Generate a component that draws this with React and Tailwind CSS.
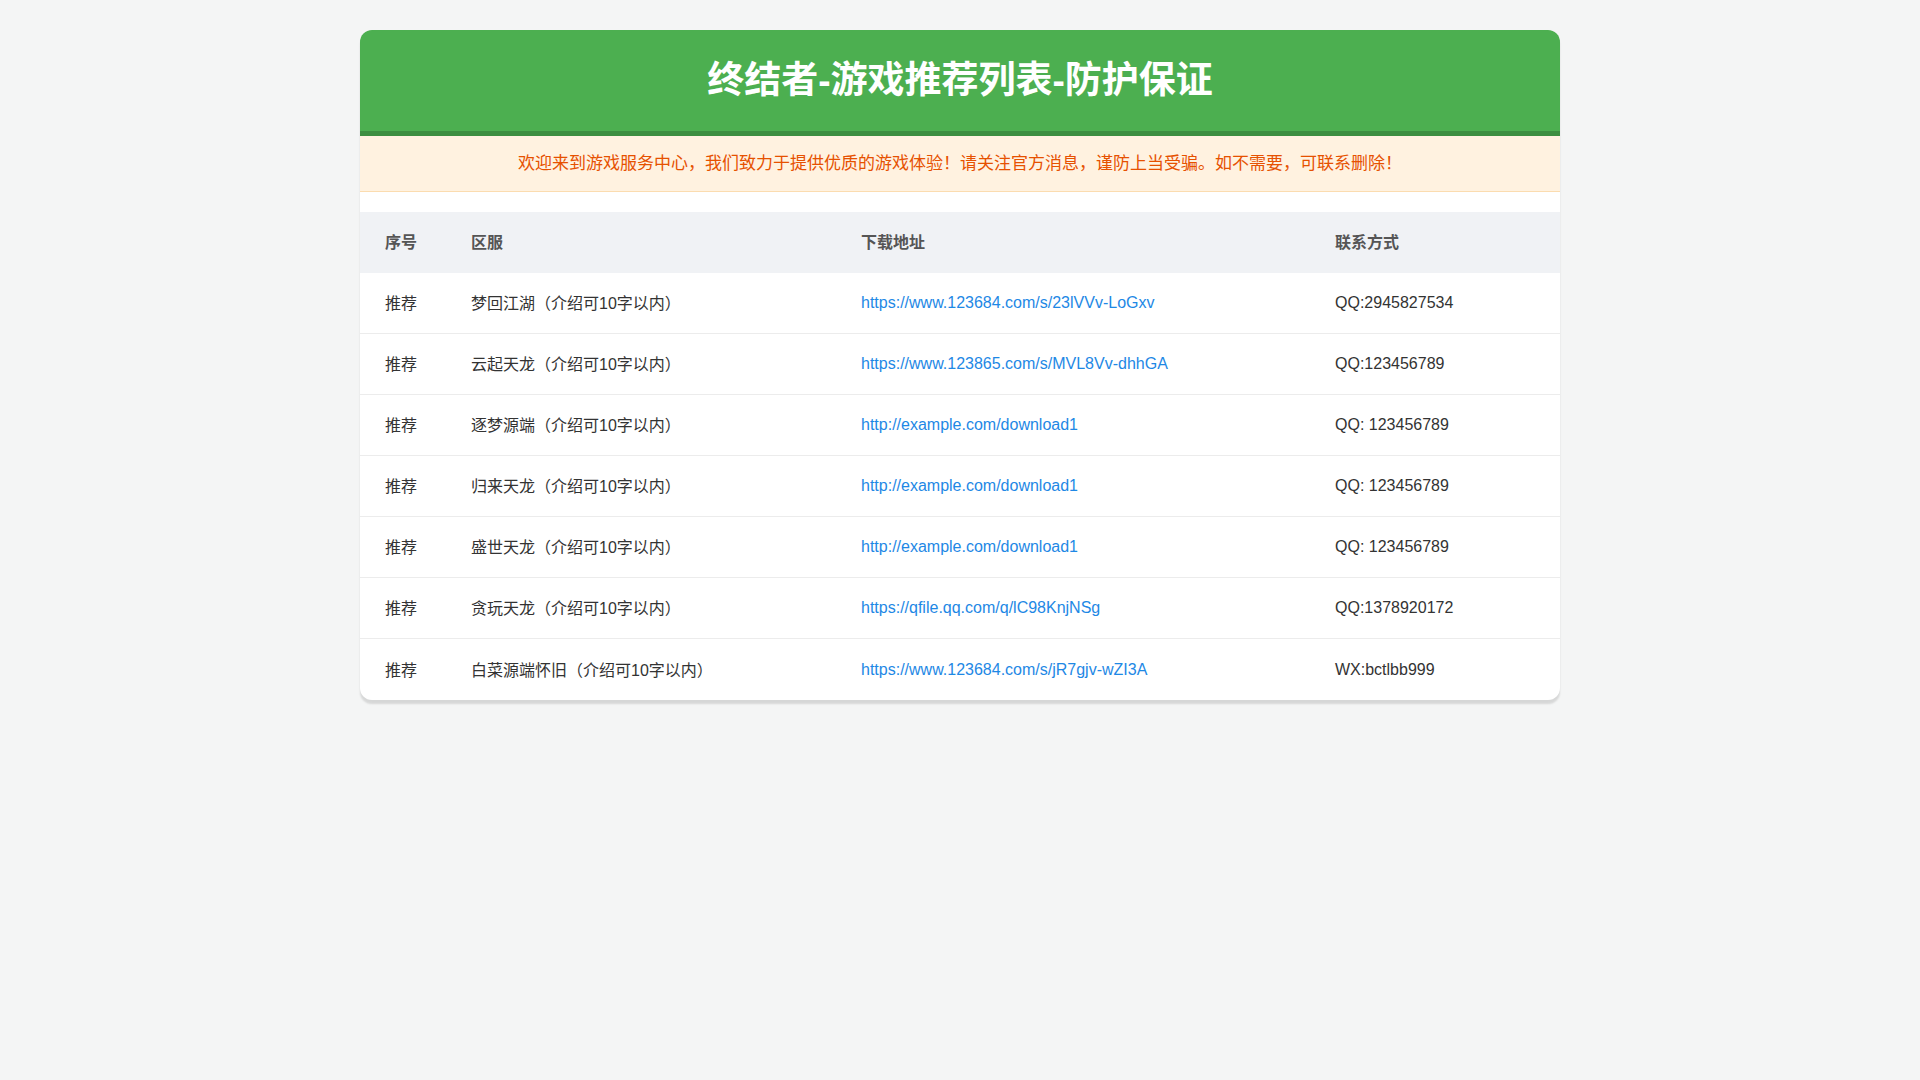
const rows = [
  ["梦回江湖（介绍可10字以内）", "https://www.123684.com/s/23lVVv-LoGxv", "QQ:2945827534"],
  ["云起天龙（介绍可10字以内）", "https://www.123865.com/s/MVL8Vv-dhhGA", "QQ:123456789"],
  ["逐梦源端（介绍可10字以内）", "http://example.com/download1", "QQ: 123456789"],
  ["归来天龙（介绍可10字以内）", "http://example.com/download1", "QQ: 123456789"],
  ["盛世天龙（介绍可10字以内）", "http://example.com/download1", "QQ: 123456789"],
  ["贪玩天龙（介绍可10字以内）", "https://qfile.qq.com/q/lC98KnjNSg", "QQ:1378920172"],
  ["白菜源端怀旧（介绍可10字以内）", "https://www.123684.com/s/jR7gjv-wZI3A", "WX:bctlbb999"],
];
const font = { fontFamily: '"Liberation Sans", "Noto Sans CJK SC", sans-serif' };
export default function App() {
  return (
    <div className="min-h-[1080px] bg-[#f4f5f5] pt-[30px]" style={font}>
      <div className="mx-auto w-[1200px] bg-white rounded-[12px] overflow-hidden shadow-[0_4px_2px_rgba(0,0,0,0.12)]">
        <div className="h-[106px] bg-[#4caf50] border-b-[5px] border-[#3d8e40] flex items-center justify-center">
          <h1 className="text-white text-[37px] font-bold">终结者-游戏推荐列表-防护保证</h1>
        </div>
        <div className="h-[56px] bg-[#fff2e0] border-b border-[#fbdcb0] flex items-center justify-center text-[#e65100] text-[17px]">
          欢迎来到游戏服务中心，我们致力于提供优质的游戏体验！请关注官方消息，谨防上当受骗。如不需要，可联系删除！
        </div>
        <div className="mt-[20px]">
          <div className="flex h-[61px] items-center bg-[#f0f2f5] text-[#555] font-bold text-[16px]">
            <div className="w-[111px] pl-[25px]">序号</div>
            <div className="w-[390px]">区服</div>
            <div className="w-[474px]">下载地址</div>
            <div className="flex-1">联系方式</div>
          </div>
          {rows.map((r, i) => (
            <div key={i} className={`flex h-[61px] items-center text-[16px] text-[#333] ${i < rows.length - 1 ? "border-b border-[#ececec]" : ""}`}>
              <div className="w-[111px] pl-[25px] pt-[2px]">推荐</div>
              <div className="w-[390px] pt-[2px]">{r[0]}</div>
              <div className="w-[474px] text-[#1e88e5]">{r[1]}</div>
              <div className="flex-1">{r[2]}</div>
            </div>
          ))}
        </div>
      </div>
    </div>
  );
}
